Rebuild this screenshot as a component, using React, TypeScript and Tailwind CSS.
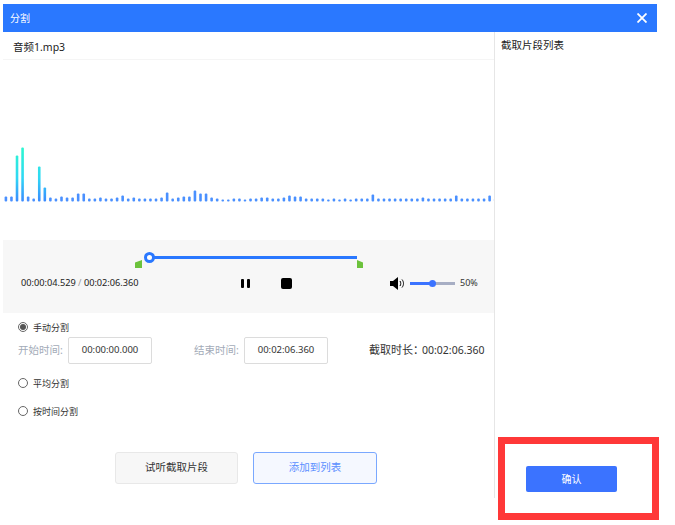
const font = { fontFamily: '"Noto Sans", "Noto Sans CJK SC", sans-serif' };

// bar heights read off the waveform, left to right
const bars = [
  5, 5, 46, 54, 5, 3, 35, 14, 4, 3, 5, 4, 4, 8, 8, 3, 3, 4, 3, 3, 4, 6, 3, 4, 3, 3, 3, 3, 4, 9,
  3, 4, 5, 5, 11, 8, 8, 4, 3, 2, 2, 3, 3, 2, 3, 3, 4, 4, 3, 3, 4, 6, 5, 5, 3, 3, 3, 3, 2, 3,
  2, 3, 2, 3, 3, 3, 7, 3, 3, 3, 3, 3, 3, 3, 3, 4, 3, 3, 3, 3, 3, 6, 3, 3, 3, 3, 3, 6, 3,
];

function Waveform() {
  return (
    <svg width="491" height="180" className="block">
      <defs>
        <linearGradient id="wave" gradientUnits="userSpaceOnUse" x1="0" y1="90" x2="0" y2="141">
          <stop offset="0" stopColor="#2df5d2" />
          <stop offset="0.55" stopColor="#2fd8f5" />
          <stop offset="1" stopColor="#3b8bff" />
        </linearGradient>
      </defs>
      {bars.map((h, i) => (
        <rect
          key={i}
          x={1.6 + i * 5.56}
          y={141.5 - h}
          width="2.6"
          height={h}
          rx="1"
          fill={h > 12 ? 'url(#wave)' : '#4a90ff'}
        />
      ))}
    </svg>
  );
}

function Radio({ label, checked }: { label: string; checked?: boolean }) {
  return (
    <div className="flex items-center gap-[5px] h-3 pl-[15px] text-[9px] text-[#333]">
      <span className="size-[10px] rounded-full border border-[#666] flex items-center justify-center bg-white">
        {checked && <span className="size-[6px] rounded-full bg-[#555]" />}
      </span>
      <span className="pt-[2px]">{label}</span>
    </div>
  );
}

function TimeField({ label, value, className }: { label: string; value: string; className?: string }) {
  return (
    <div className={`flex items-center gap-1 ${className ?? ''}`}>
      <span className="w-[46px] text-[10.500px] text-[#a3abb8] whitespace-nowrap">{label}</span>
      <div className="w-[84px] h-[27px] border border-[#dcdcdc] rounded-[2px] flex items-center justify-center text-[9.5px] text-[#333]">
        {value}
      </div>
    </div>
  );
}

function Player() {
  return (
    <div className="h-[73px] bg-[#f7f7f7] shrink-0">
      <div className="h-[12px]" />
      <div className="ml-[132px] w-[228px] relative h-[16px]">
        <div className="absolute left-[14px] right-[6px] top-[4px] h-[3px] bg-[#2a78ff]" />
        <div className="absolute left-[9px] top-0 size-[11px] rounded-full bg-white border-[3px] border-[#2a78ff]" />
        <div className="absolute left-0 top-[8px] w-[7px] h-[8px] bg-[#6cc23c] [clip-path:polygon(100%_0,100%_100%,0_100%,0_30%)]" />
        <div className="absolute left-[222px] top-[8px] w-[6px] h-[8px] bg-[#6cc23c] [clip-path:polygon(0_0,100%_30%,100%_100%,0_100%)]" />
      </div>
      <div className="flex items-center h-[16px] mt-[7px] text-[9.200px]">
        <div className="ml-[18px] w-[118px] whitespace-nowrap text-[#222]">
          00:00:04.529 <span className="text-[#999]">/</span> 00:02:06.360
        </div>
        <div className="ml-[102px] flex gap-[3px]">
          <span className="w-[3px] h-[9px] bg-black rounded-[1px]" />
          <span className="w-[3px] h-[9px] bg-black rounded-[1px]" />
        </div>
        <div className="ml-[31px] size-[11px] bg-black rounded-[2px]" />
        <svg width="15" height="13" viewBox="0 0 15 13" className="ml-[98px]">
          <path d="M0 4h3l5-4v13l-5-4H0z" fill="#000" />
          <path d="M10 4c1 1.500 1 3.500 0 5M12 2.500c2 2.500 2 5.500 0 8" fill="none" stroke="#000" strokeWidth="1" />
        </svg>
        <div className="ml-[5px] w-[45px] h-[3px] bg-[#a7aec4] relative">
          <div className="w-[23px] h-full bg-[#3b73ff]" />
          <div className="absolute left-[19px] -top-[2px] size-[7px] rounded-full bg-[#3b73ff]" />
        </div>
        <span className="ml-[5px] text-[9px] text-[#333]">50%</span>
      </div>
    </div>
  );
}

export default function App() {
  return (
    <div className="w-[675px] h-[525px] bg-white relative overflow-hidden pt-1 pl-[3px]" style={font}>
      <div className="w-[654px]">
        {/* Header */}
        <div className="h-7 bg-[#2a78ff] flex items-center justify-between pl-[7px] pr-[10px] text-white text-[10px]">
          <span>分割</span>
          <svg width="10" height="10" viewBox="0 0 10 10">
            <path d="M.5.500l9 9M9.500.500l-9 9" stroke="#fff" strokeWidth="1.800" fill="none" />
          </svg>
        </div>

        <div className="flex h-[466px]">
          {/* Left column */}
          <div className="w-[491px] flex flex-col shrink-0">
            <div className="h-7 border-b border-[#f5f5f5] pl-[10px] pt-1 flex items-center text-[10.500px] text-[#222]">
              音频1.mp3
            </div>
            <Waveform />
            <Player />
            <div className="mt-2">
              <Radio label="手动分割" checked />
            </div>
            <div className="flex items-center mt-[4px] pl-[15px]">
              <TimeField label="开始时间:" value="00:00:00.000" />
              <TimeField label="结束时间:" value="00:02:06.360" className="ml-[42px]" />
              <div className="ml-[41px] flex items-center text-[#333] whitespace-nowrap">
                <span className="w-[53px] text-[11px]">截取时长：</span>
                <span className="text-[10.500px]">00:02:06.360</span>
              </div>
            </div>
            <div className="mt-[13px]">
              <Radio label="平均分割" />
            </div>
            <div className="mt-[16px]">
              <Radio label="按时间分割" />
            </div>
            <div className="flex gap-[15px] ml-[112px] mt-[35px]">
              <button className="w-[123px] h-8 rounded-[3px] border border-[#e8e8e8] bg-[#f7f7f7] text-[10.500px] text-[#333]">
                试听截取片段
              </button>
              <button className="w-[124px] h-8 rounded-[3px] border border-[#7aa8ff] bg-[#f5f8ff] text-[10.500px] text-[#5b8fff]">
                添加到列表
              </button>
            </div>
          </div>

          {/* Right column */}
          <div className="flex-1 border-l border-[#e6e6e6] flex flex-col justify-between pb-[6px]">
            <div className="pl-[6px] pt-[6px] text-[10.500px] text-[#222]">截取片段列表</div>
            <button className="ml-[31px] w-[91px] h-[26px] rounded-[2px] bg-[#3b73ff] text-white text-[10px]">
              确认
            </button>
          </div>
        </div>
      </div>

      {/* red annotation frame over the screenshot */}
      <div className="absolute left-[498px] top-[437px] w-[161px] h-[83px] border-[7px] border-[#ff3838]" />
    </div>
  );
}
